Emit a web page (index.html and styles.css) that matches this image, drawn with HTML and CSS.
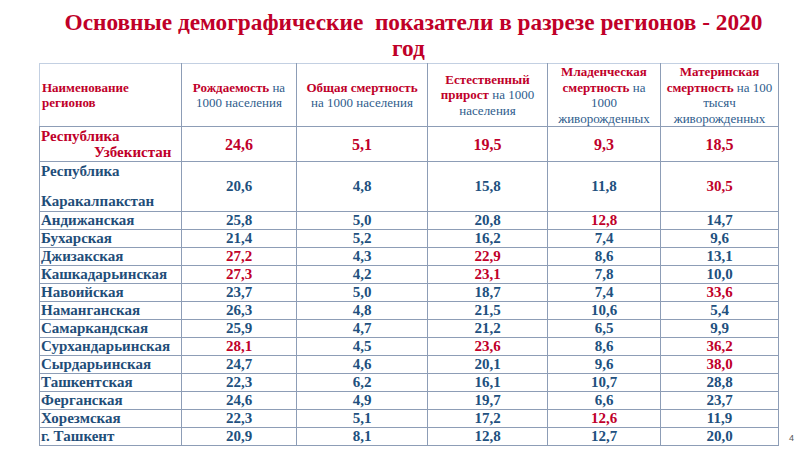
FILE: index.html
```html
<!DOCTYPE html>
<html lang="ru">
<head>
<meta charset="utf-8">
<title>Демографические показатели</title>
<link rel="stylesheet" href="styles.css">
</head>
<body>
<div class="slide">
  <h1 class="title"><span class="t1">Основные демографические&nbsp; показатели в разрезе регионов - 2020</span><span class="t2">год</span></h1>
  <table class="data">
    <colgroup>
      <col class="c1"><col class="c2"><col class="c3"><col class="c4"><col class="c5"><col class="c6">
    </colgroup>
    <thead>
      <tr>
        <th class="first"><span class="hr">Наименование<br>регионов</span></th>
        <th><span class="hr">Рождаемость</span> на<br>1000 населения</th>
        <th><span class="hr">Общая смертность</span><br>на 1000 населения</th>
        <th><span class="hr">Естественный<br>прирост</span> на 1000<br>населения</th>
        <th><span class="hr">Младенческая<br>смертность</span> на<br>1000<br>живорожденных</th>
        <th><span class="hr">Материнская<br>смертность</span> на 100<br>тысяч<br>живорожденных</th>
      </tr>
    </thead>
    <tbody>
      <tr class="total">
        <td class="name"><span class="l1">Республика</span><span class="l2">Узбекистан</span></td>
        <td>24,6</td><td>5,1</td><td>19,5</td><td>9,3</td><td>18,5</td>
      </tr>
      <tr class="kk">
        <td class="name"><div class="split"><span>Республика</span><span>Каракалпакстан</span></div></td>
        <td>20,6</td><td>4,8</td><td>15,8</td><td>11,8</td><td class="r">30,5</td>
      </tr>
      <tr><td class="name">Андижанская</td><td>25,8</td><td>5,0</td><td>20,8</td><td class="r">12,8</td><td>14,7</td></tr>
      <tr><td class="name">Бухарская</td><td>21,4</td><td>5,2</td><td>16,2</td><td>7,4</td><td>9,6</td></tr>
      <tr><td class="name">Джизакская</td><td class="r">27,2</td><td>4,3</td><td class="r">22,9</td><td>8,6</td><td>13,1</td></tr>
      <tr><td class="name">Кашкадарьинская</td><td class="r">27,3</td><td>4,2</td><td class="r">23,1</td><td>7,8</td><td>10,0</td></tr>
      <tr><td class="name">Навоийская</td><td>23,7</td><td>5,0</td><td>18,7</td><td>7,4</td><td class="r">33,6</td></tr>
      <tr><td class="name">Наманганская</td><td>26,3</td><td>4,8</td><td>21,5</td><td>10,6</td><td>5,4</td></tr>
      <tr><td class="name">Самаркандская</td><td>25,9</td><td>4,7</td><td>21,2</td><td>6,5</td><td>9,9</td></tr>
      <tr><td class="name">Сурхандарьинская</td><td class="r">28,1</td><td>4,5</td><td class="r">23,6</td><td>8,6</td><td class="r">36,2</td></tr>
      <tr><td class="name">Сырдарьинская</td><td>24,7</td><td>4,6</td><td>20,1</td><td>9,6</td><td class="r">38,0</td></tr>
      <tr><td class="name">Ташкентская</td><td>22,3</td><td>6,2</td><td>16,1</td><td>10,7</td><td>28,8</td></tr>
      <tr><td class="name">Ферганская</td><td>24,6</td><td>4,9</td><td>19,7</td><td>6,6</td><td>23,7</td></tr>
      <tr><td class="name">Хорезмская</td><td>22,3</td><td>5,1</td><td>17,2</td><td class="r">12,6</td><td>11,9</td></tr>
      <tr><td class="name">г. Ташкент</td><td>20,9</td><td>8,1</td><td>12,8</td><td>12,7</td><td>20,0</td></tr>
    </tbody>
  </table>
  <div class="page">4</div>
</div>
</body>
</html>
```

FILE: styles.css
```css
html, body {
  margin: 0;
  padding: 0;
  background: #ffffff;
}
.slide {
  position: relative;
  width: 800px;
  height: 449px;
  overflow: hidden;
  background: #ffffff;
}
.title {
  margin: 0 0 0 39px;
  width: 739px;
  padding-top: 9px;
  font-family: "Liberation Serif", "Times New Roman", serif;
  font-weight: bold;
  font-size: 23.3px;
  line-height: 26px;
  color: #c00028;
  text-align: center;
  white-space: nowrap;
}
.t1, .t2 {
  display: block;
}
.t1 {
  padding-left: 10px;
}
.data {
  margin: 2px 0 0 39px;
  width: 739px;
  border-collapse: collapse;
  table-layout: fixed;
  font-family: "Liberation Serif", "Times New Roman", serif;
  border: 1px solid #c3d0e2;
}
.c1 { width: 142px; }
.c2 { width: 115px; }
.c3 { width: 131px; }
.c4 { width: 120px; }
.c5 { width: 113px; }
.c6 { width: 118px; }
.data th {
  height: 62px;
  padding: 0 1px;
  font-weight: normal;
  font-size: 13px;
  line-height: 15.5px;
  color: #2e5c8c;
  text-align: center;
  vertical-align: middle;
  white-space: nowrap;
  border-left: 1px solid #8d9db6;
  border-right: 1px solid #8d9db6;
  border-bottom: 1px solid #8d9db6;
}
.data th.first {
  text-align: left;
  padding-left: 2px;
  border-left: 1px solid #c3d0e2;
}
.hr {
  color: #c0002a;
  font-weight: bold;
}
.data td {
  height: 17px;
  padding: 0;
  font-size: 15px;
  font-weight: bold;
  line-height: 17px;
  color: #21507e;
  text-align: center;
  vertical-align: middle;
  border: 1px solid #8d9db6;
  white-space: nowrap;
}
.data td.name {
  text-align: left;
  padding-left: 1px;
  color: #1f4e79;
}
.data td.r {
  color: #c0002a;
}
.total td {
  height: 34px;
  font-size: 16px;
  color: #c0002a;
}
.total td.name {
  color: #c0002a;
  font-size: 15px;
  line-height: 16px;
}
.l1, .l2 {
  display: block;
}
.l2 {
  padding-left: 53px;
}
.kk td {
  height: 49px;
}
.split {
  display: flex;
  flex-direction: column;
  justify-content: space-between;
  height: 47px;
  line-height: 17px;
}
.page {
  position: absolute;
  right: 6px;
  bottom: 6px;
  font-family: "Liberation Sans", Arial, sans-serif;
  font-size: 9px;
  color: #555555;
}
```
